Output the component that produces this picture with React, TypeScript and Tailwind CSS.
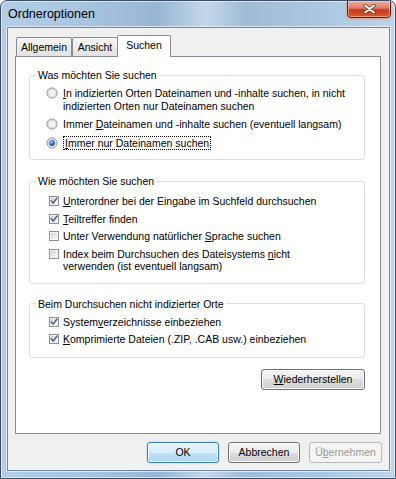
import React from 'react'

const Radio = ({ checked = false }: { checked?: boolean }) => (
  <svg width="12" height="12" viewBox="0 0 12 12">
    <defs>
      <linearGradient id="radioRing" x1="0" y1="0" x2="1" y2="1">
        <stop offset="0" stopColor="#d6d6d6" />
        <stop offset="1" stopColor="#fafafa" />
      </linearGradient>
      <radialGradient id="radioDot" cx="0.38" cy="0.35" r="0.75">
        <stop offset="0" stopColor="#b4e2fb" />
        <stop offset="0.45" stopColor="#2b7fcf" />
        <stop offset="1" stopColor="#0e3d7c" />
      </radialGradient>
    </defs>
    <circle cx="6" cy="6" r="5.1" fill="url(#radioRing)" stroke="#8b8d8f" strokeWidth="0.9" />
    <circle cx="6" cy="6" r="3.6" fill="#f3f3f3" stroke="#cfcfcf" strokeWidth="0.6" />
    {checked && <circle cx="6" cy="6" r="2.9" fill="url(#radioDot)" />}
  </svg>
)

const Check = ({ checked = false }: { checked?: boolean }) => (
  <svg width="13" height="12" viewBox="0 0 13 12">
    <defs>
      <linearGradient id="checkFill" x1="0" y1="0" x2="1" y2="1">
        <stop offset="0" stopColor="#d2d2d2" />
        <stop offset="1" stopColor="#f7f7f7" />
      </linearGradient>
    </defs>
    <rect x="3.5" y="1.5" width="9" height="9" fill="#f5f5f5" stroke="#8e8f8f" />
    <rect x="5" y="3" width="6" height="6" fill="url(#checkFill)" />
    {checked && (
      <path
        d="M5.2 5.9 L7.2 8 L10.9 3.2"
        fill="none"
        stroke="#4b5e8c"
        strokeWidth="1.5"
        strokeLinecap="square"
      />
    )}
  </svg>
)

const Option = ({
  kind,
  checked,
  children,
}: {
  kind: 'radio' | 'check'
  checked?: boolean
  children: React.ReactNode
}) => (
  <div className="flex items-start gap-[4px]">
    <div className="w-[13px] h-[12.5px] flex items-center shrink-0">
      {kind === 'radio' ? <Radio checked={checked} /> : <Check checked={checked} />}
    </div>
    <div className="leading-[12.5px]">{children}</div>
  </div>
)

const Group = ({
  title,
  className = '',
  bodyClass = '',
  children,
}: {
  title: string
  className?: string
  bodyClass?: string
  children: React.ReactNode
}) => (
  <fieldset
    className={`w-[336px] border border-[#d5dfe5] rounded-[3px] pl-[6px] ${className}`}
  >
    <legend className="px-[2px] leading-[14px]">{title}</legend>
    <div className={`pl-[10px] flex flex-col ${bodyClass}`}>{children}</div>
  </fieldset>
)

const Button = ({
  children,
  variant = 'normal',
  className = '',
}: {
  children: React.ReactNode
  variant?: 'normal' | 'default' | 'disabled'
  className?: string
}) => {
  const look =
    variant === 'default'
      ? 'border-[#3c7fb1] bg-[linear-gradient(180deg,#e6f4fc_0%,#d6edfa_50%,#bfe3f8_50%,#acd8f3_100%)] shadow-[inset_0_0_0_1px_#f3fbff,0_0_2px_#8fd0f5] text-black'
      : variant === 'disabled'
        ? 'border-[#b5b9bc] bg-[#f4f4f4] text-[#9a9a9a]'
        : 'border-[#707070] bg-[linear-gradient(180deg,#f4f4f4_0%,#ebebeb_50%,#dddddd_50%,#d0d0d0_100%)] shadow-[inset_0_0_0_1px_#fbfbfb] text-black'
  return (
    <div
      className={`h-[21px] rounded-[3px] border flex items-center justify-center leading-[12.5px] ${look} ${className}`}
    >
      {children}
    </div>
  )
}

export default function App() {
  return (
    <div className="w-[396px] h-[479px] overflow-hidden rounded-t-[7px] border border-[#3a4d62] bg-[linear-gradient(90deg,#b3cde6_0%,#a9c5e0_20%,#98b6d3_40%,#c4d8eb_52%,#a0bcd7_62%,#aac6e1_80%,#bdd5ec_100%)] shadow-[inset_0_0_0_1px_rgba(255,255,255,0.55)] font-['Liberation_Sans',Arial,sans-serif] text-[10.5px] text-black flex flex-col">
      {/* title bar */}
      <div className="h-[26px] flex items-start shrink-0">
        <div className="pl-[7px] pt-[6px] text-[12.5px] leading-[15px] text-black">
          Ordneroptionen
        </div>
        <div className="ml-auto mr-[4px] -mt-px w-[44px] h-[18px] rounded-b-[4px] border border-[#5a1a0e] bg-[linear-gradient(180deg,#eab1a3_0%,#dc7a62_45%,#c43b1c_55%,#d8592e_100%)] shadow-[inset_0_0_0_1px_rgba(255,220,200,0.5),0_1px_3px_rgba(255,120,60,0.6)] flex items-center justify-center">
          <svg width="13" height="10" viewBox="0 0 13 10">
            <path d="M2 1.5 L11 8.5 M11 1.5 L2 8.5" stroke="#5b2a1e" strokeWidth="3.4" strokeLinecap="round" />
            <path d="M2 1.5 L11 8.5 M11 1.5 L2 8.5" stroke="#ffffff" strokeWidth="2" strokeLinecap="round" />
          </svg>
        </div>
      </div>

      {/* client area */}
      <div className="ml-[6px] w-[383px] h-[444px] border border-[#6d88a4] bg-[#f0f0f0] shadow-[0_0_0_1px_rgba(255,255,255,0.6)] flex flex-col shrink-0">
        {/* tabs */}
        <div className="flex items-end h-[22px] mt-[7px] -mb-px pl-[8px] relative z-10">
          <div className="w-[56px] h-[19px] mb-px border border-b-0 border-[#898c95] rounded-t-[2px] bg-[linear-gradient(180deg,#f6f6f6_0%,#ececec_50%,#e2e2e2_100%)] flex items-center justify-center leading-[12.5px]">
            Allgemein
          </div>
          <div className="w-[46px] h-[19px] mb-px border border-b-0 border-[#898c95] rounded-t-[2px] bg-[linear-gradient(180deg,#f6f6f6_0%,#ececec_50%,#e2e2e2_100%)] flex items-center justify-center leading-[12.5px]">
            Ansicht
          </div>
          <div className="w-[54px] h-[22px] -ml-px border border-b-0 border-[#898c95] rounded-t-[2px] bg-white flex items-center justify-center pb-[2px] leading-[12.5px]">
            Suchen
          </div>
        </div>

        {/* tab panel */}
        <div className="ml-[7px] w-[366px] h-[378px] border border-[#898c95] bg-white pt-[11px] pl-[13px] shrink-0">
          <Group title="Was möchten Sie suchen" bodyClass="pt-[5px] pb-[10px] gap-[6px]">
            <Option kind="radio">
              <span className="underline">I</span>n indizierten Orten Dateinamen und -inhalte suchen, in nicht
              <br />
              indizierten Orten nur Dateinamen suchen
            </Option>
            <Option kind="radio">
              Immer <span className="underline">D</span>ateinamen und -inhalte suchen (eventuell langsam)
            </Option>
            <Option kind="radio" checked>
              <span className="border border-dotted border-black px-px">
                <span className="underline">I</span>mmer nur Dateinamen suchen
              </span>
            </Option>
          </Group>

          <Group
            title="Wie möchten Sie suchen"
            className="mt-[14px]"
            bodyClass="pt-[7px] pb-[10px] gap-[5px]"
          >
            <Option kind="check" checked>
              <span className="underline">U</span>nterordner bei der Eingabe im Suchfeld durchsuchen
            </Option>
            <Option kind="check" checked>
              <span className="underline">T</span>eiltreffer finden
            </Option>
            <Option kind="check">
              Unter Verwendung natürlicher <span className="underline">S</span>prache suchen
            </Option>
            <Option kind="check">
              Index beim Durchsuchen des Dateisystems <span className="underline">n</span>icht
              <br />
              verwenden (ist eventuell langsam)
            </Option>
          </Group>

          <Group
            title="Beim Durchsuchen nicht indizierter Orte"
            className="mt-[13px]"
            bodyClass="pt-[5px] pb-[11px] gap-[5px]"
          >
            <Option kind="check" checked>
              System<span className="underline">v</span>erzeichnisse einbeziehen
            </Option>
            <Option kind="check" checked>
              <span className="underline">K</span>omprimierte Dateien (.ZIP, .CAB usw.) einbeziehen
            </Option>
          </Group>

          <div className="w-[336px] flex justify-end mt-[11px]">
            <Button className="w-[104px]">
              <span className="underline">W</span>iederherstellen
            </Button>
          </div>
        </div>

        {/* dialog buttons */}
        <div className="flex justify-end gap-[9px] pr-[7px] mt-[8px]">
          <Button variant="default" className="w-[72px]">
            OK
          </Button>
          <Button className="w-[72px]">Abbrechen</Button>
          <Button variant="disabled" className="w-[73px]">
            Ü<span className="underline">b</span>ernehmen
          </Button>
        </div>
      </div>
    </div>
  )
}
